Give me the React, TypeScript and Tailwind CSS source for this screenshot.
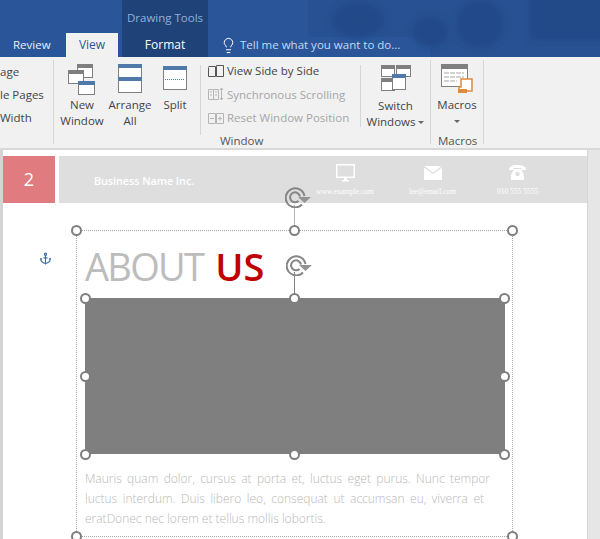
import { Anchor, Lightbulb } from "lucide-react";
import type { ReactNode } from "react";

function Handle({ className }: { className: string }) {
  return <div className={`absolute h-[11px] w-[11px] rounded-full border-2 border-[#7f7f7f] bg-white ${className}`} />;
}

function RotateHandle({ className }: { className: string }) {
  return (
    <svg viewBox="0 0 26 22" className={`absolute h-[22px] w-[26px] ${className}`} fill="none" stroke="#858585">
      <path d="M19.5 10A9.5 9.5 0 1 0 17 18.5" strokeWidth="2" />
      <path d="M15 10.5A5 5 0 1 0 13.5 15" strokeWidth="2" />
      <path d="M13 11H26L19.5 17Z" fill="#939393" stroke="none" />
    </svg>
  );
}

function WindowIcon({ x, y, w, h, blue }: { x: number; y: number; w: number; h: number; blue?: boolean }) {
  return (
    <g>
      <rect x={x + 0.5} y={y + 0.5} width={w - 1} height={h - 1} fill="#fff" stroke="#7f7f7f" />
      <rect x={x} y={y} width={w} height="4" fill={blue ? "#4f79a8" : "#7f7f7f"} />
    </g>
  );
}

function Caret() {
  return (
    <svg width="6" height="3" viewBox="0 0 6 3" className="inline-block align-middle">
      <path d="M0 0H6L3 3Z" fill="#666" />
    </svg>
  );
}

function RibbonButton({ label, line2, width, children }: { label: string; line2: ReactNode; width: string; children: ReactNode }) {
  return (
    <div className={`flex flex-col items-center ${width}`}>
      <div className="flex h-[31px] items-start">{children}</div>
      <div className="mt-[2px] text-center text-[11.5px] leading-[16px] whitespace-nowrap text-[#444]">
        <div>{label}</div>
        <div className="h-[16px]">{line2}</div>
      </div>
    </div>
  );
}

function Separator({ className }: { className: string }) {
  return <div className={`w-px bg-[#d6d6d6] ${className}`} />;
}

function Header() {
  return (
    <div className="relative h-[57px] overflow-hidden bg-[#2a5699]">
      <svg viewBox="0 0 392 57" className="absolute left-[208px] top-0 h-[57px] w-[392px]">
        <defs>
          <filter id="soft">
            <feGaussianBlur stdDeviation="3" />
          </filter>
        </defs>
        <rect x="100" width="292" height="37" fill="#275192" />
        <rect x="222" y="37" width="170" height="20" fill="#275192" />
        <g filter="url(#soft)" fill="#224a88">
          <ellipse cx="150" cy="20" rx="26" ry="18" />
          <ellipse cx="222" cy="32" rx="18" ry="16" />
          <ellipse cx="272" cy="24" rx="24" ry="24" />
          <rect x="322" y="-8" width="80" height="48" />
        </g>
      </svg>
      <div className="absolute left-[122px] top-0 flex h-[57px] w-[86px] flex-col items-center bg-[#1f4279]">
        <div className="mt-[10px] text-[11.5px] leading-[16px] text-[#8fb0dc]">Drawing Tools</div>
        <div className="mt-[10px] text-[12px] leading-[17px] text-white">Format</div>
      </div>
      <div className="absolute left-0 top-[33px] flex h-[24px] items-center">
        <span className="ml-[13px] w-[53px] text-[11.5px] text-[#e8eef8]">Review</span>
        <span className="flex h-[24px] w-[52px] items-center justify-center bg-[#f1f1f1] text-[12px] text-[#2b579a]">View</span>
      </div>
      <div className="absolute left-[220px] top-[35px] flex h-[20px] items-center gap-[3px] text-[11.5px] text-[#c6d7f0]">
        <Lightbulb size={17} strokeWidth={1.4} className="text-white" />
        <span>Tell me what you want to do...</span>
      </div>
    </div>
  );
}

function Ribbon() {
  return (
    <div className="relative flex h-[93px] border-b-2 border-[#d9d9d9] bg-[#f1f1f1]">
      <div className="w-[53px] pt-[3px] text-[11.5px] leading-[23px] text-[#444]">
        <div>age</div>
        <div>le Pages</div>
        <div>Width</div>
      </div>
      <Separator className="mt-[3px] h-[84px]" />
      <div className="flex w-[146px] pt-[7px]">
        <RibbonButton label="New" line2="Window" width="w-[56px]">
          <svg width="30" height="31" viewBox="0 0 30 31">
            <WindowIcon x={10} y={0} w={16} h={14} />
            <WindowIcon x={1} y={6} w={16} h={14} />
            <WindowIcon x={11} y={17} w={17} h={14} blue />
          </svg>
        </RibbonButton>
        <RibbonButton label="Arrange" line2="All" width="w-[40px]">
          <svg width="24" height="29" viewBox="0 0 24 29">
            <WindowIcon x={0} y={0} w={24} h={16} blue />
            <WindowIcon x={0} y={13} w={24} h={16} blue />
          </svg>
        </RibbonButton>
        <RibbonButton label="Split" line2="" width="w-[50px]">
          <svg width="24" height="26" viewBox="0 0 24 26">
            <WindowIcon x={0} y={2} w={24} h={24} blue />
            <path d="M2 15.5H22" stroke="#4f79a8" strokeDasharray="1 1" />
          </svg>
        </RibbonButton>
      </div>
      <Separator className="mt-[8px] h-[70px]" />
      <div className="flex w-[159px] flex-col pl-[7px] pt-[2px] text-[11.5px] leading-[23.5px]">
        <div className="flex items-center gap-[3px] text-[#444]">
          <svg width="16" height="12" viewBox="0 0 16 12" fill="none" stroke="#555"><path d="M.5 2.5V11.5H7.5V1.5H.5M8.5 1.5V11.5H15.5V.5H8.5Z" /></svg>
          <span>View Side by Side</span>
        </div>
        <div className="flex items-center gap-[3px] text-[#a6a6a6]">
          <svg width="16" height="14" viewBox="0 0 16 14" fill="none" stroke="#b5b5b5"><path d="M.5 2.5H5.5V12.5H.5ZM5.5 2.5H10.5V12.5H5.5ZM2 5H4M2 8H4M7 5H9M7 8H9M13.5 1V13M12 3L13.5 1L15 3M12 11L13.5 13L15 11" /></svg>
          <span>Synchronous Scrolling</span>
        </div>
        <div className="flex items-center gap-[3px] text-[#a6a6a6]">
          <svg width="16" height="12" viewBox="0 0 16 12" fill="none" stroke="#b5b5b5"><path d="M.5 1.5H7.5V11.5H.5ZM8.5 1.5H15.5V11.5H8.5ZM2 6.5H6M10 6.5H14M12 4.5V8.5" /></svg>
          <span>Reset Window Position</span>
        </div>
      </div>
      <Separator className="mt-[8px] h-[62px]" />
      <div className="flex w-[69px] justify-center pt-[8px]">
        <RibbonButton
          label="Switch"
          line2={
            <span>
              Windows <Caret />
            </span>
          }
          width="w-[69px]"
        >
          <svg width="30" height="26" viewBox="0 0 30 26">
            <WindowIcon x={0} y={0} w={14} h={12} />
            <WindowIcon x={15} y={0} w={15} h={12} />
            <WindowIcon x={0} y={13} w={14} h={13} />
            <WindowIcon x={11} y={9} w={14} h={16} blue />
          </svg>
        </RibbonButton>
      </div>
      <Separator className="mt-[3px] h-[84px]" />
      <div className="flex w-[52px] justify-center pt-[7px]">
        <RibbonButton label="Macros" line2={<Caret />} width="w-[52px]">
          <svg width="32" height="30" viewBox="0 0 32 30">
            <rect x=".5" y=".5" width="26" height="22" fill="#fff" stroke="#7f7f7f" />
            <rect width="27" height="5" fill="#7f7f7f" />
            <path d="M3 9H23M3 13H23M3 17H16" stroke="#a5a5a5" strokeDasharray="5 1" />
            <path d="M20 15H31V27H18V23H20Z" fill="#fff" stroke="#e08b3c" strokeWidth="1.5" />
            <rect x="17" y="25" width="9" height="4" fill="#e08b3c" />
          </svg>
        </RibbonButton>
      </div>
      <Separator className="mt-[3px] h-[84px]" />
      <div className="absolute left-[220px] top-[76px] text-[11.5px] leading-[16px] text-[#555]">Window</div>
      <div className="absolute left-[438px] top-[76px] text-[11.5px] leading-[16px] text-[#555]">Macros</div>
    </div>
  );
}

function Contact({ width, label, children }: { width: string; label: string; children: ReactNode }) {
  return (
    <div className={`flex flex-col items-center ${width}`}>
      <div className="flex h-[20px] items-center">{children}</div>
      <div className="mt-[4px] font-['Liberation_Serif',serif] text-[7.5px] leading-[10px] text-white">{label}</div>
    </div>
  );
}

function Page() {
  return (
    <div className="relative flex-1 overflow-hidden bg-white">
      <div className="mt-[6px] flex h-[47px] gap-[4px]">
        <div className="flex w-[52px] items-center justify-center bg-[#e07b7f] text-[18px] text-white">2</div>
        <div className="flex flex-1 items-center bg-[#dedede] pl-[35px]">
          <div className="mt-[4px] w-[206px] text-[10.7px] font-semibold text-white">Business Name Inc.</div>
          <Contact width="w-[90px]" label="www.example.com">
            <svg width="19" height="18" viewBox="0 0 19 18" fill="none">
              <rect x=".75" y=".75" width="17.5" height="12.5" stroke="white" strokeWidth="1.5" />
              <path d="M8 14H11V16H13V17.5H6V16H8Z" fill="white" />
            </svg>
          </Contact>
          <Contact width="w-[85px]" label="lee@email.com">
            <svg width="18" height="14" viewBox="0 0 18 14">
              <path d="M0 1.5L9 8L18 1.5V14H0Z" fill="white" />
              <path d="M0.5 0H17.5L9 6.5Z" fill="white" />
            </svg>
          </Contact>
          <Contact width="w-[85px]" label="010 555 5555">
            <svg width="17" height="15" viewBox="0 0 17 15">
              <path d="M0 5C0 1 4 0 8.5 0S17 1 17 5H12.5V3H4.5V5Z" fill="white" />
              <path d="M5 4H12L15 10V15H2V10Z" fill="white" />
              <circle cx="8.5" cy="9" r="2.2" fill="#dedede" />
            </svg>
          </Contact>
        </div>
      </div>

      <Anchor size={13} strokeWidth={2.2} className="absolute left-[36px] top-[102px] text-[#3b74ad]" />
      <div className="absolute left-[291px] top-[55px] h-[26px] w-px bg-[#b5b5b5]" />
      <RotateHandle className="left-[282px] top-[36px]" />

      <div className="relative ml-[73px] mt-[27px] h-[307px] w-[437px] border border-dotted border-[#a8a8a8] pl-[8px]">
        <Handle className="-left-[6px] -top-[6px]" />
        <Handle className="left-[212px] -top-[6px]" />
        <Handle className="-right-[6px] -top-[6px]" />
        <Handle className="-left-[6px] -bottom-[6px]" />
        <Handle className="-right-[6px] -bottom-[6px]" />

        <div className="h-[67px] pt-[9px] font-['Open_Sans',sans-serif] text-[38px] leading-[52px] tracking-[-1.7px]">
          <span className="font-normal text-[#bcbcbc]">ABOUT</span>
          <span className="ml-[12px] font-semibold tracking-[0px] text-[#c00000]">US</span>
        </div>

        <div className="relative h-[156px] w-[420px] bg-[#7f7f7f]">
          <div className="absolute left-[209px] -top-[26px] h-[26px] w-px bg-[#808080]" />
          <RotateHandle className="left-[201px] -top-[44px]" />
          <Handle className="-left-[5px] -top-[5px]" />
          <Handle className="left-[204px] -top-[5px]" />
          <Handle className="-right-[5px] -top-[5px]" />
          <Handle className="-left-[5px] top-[73px]" />
          <Handle className="-right-[5px] top-[73px]" />
          <Handle className="-left-[5px] -bottom-[6px]" />
          <Handle className="left-[204px] -bottom-[6px]" />
          <Handle className="-right-[5px] -bottom-[6px]" />
        </div>

        <div className="mt-[15px] font-['Open_Sans',sans-serif] text-[12px] font-light leading-[20px] text-[#b8b8b8]">
          <div className="w-[405px] [text-align-last:justify]">Mauris quam dolor, cursus at porta et, luctus eget purus. Nunc tempor</div>
          <div className="w-[399px] [text-align-last:justify]">luctus interdum. Duis libero leo, consequat ut accumsan eu, viverra et</div>
          <div>eratDonec nec lorem et tellus mollis lobortis.</div>
        </div>
      </div>
    </div>
  );
}

export default function App() {
  return (
    <div className="flex h-[539px] w-[600px] flex-col overflow-hidden font-['Open_Sans',sans-serif]">
      <Header />
      <Ribbon />
      <div className="flex flex-1 overflow-hidden">
        <div className="w-[3px] bg-[#d4d4d4]" />
        <Page />
        <div className="w-[13px] border-l border-[#d4d4d4] bg-[#e6e6e6]" />
      </div>
    </div>
  );
}
